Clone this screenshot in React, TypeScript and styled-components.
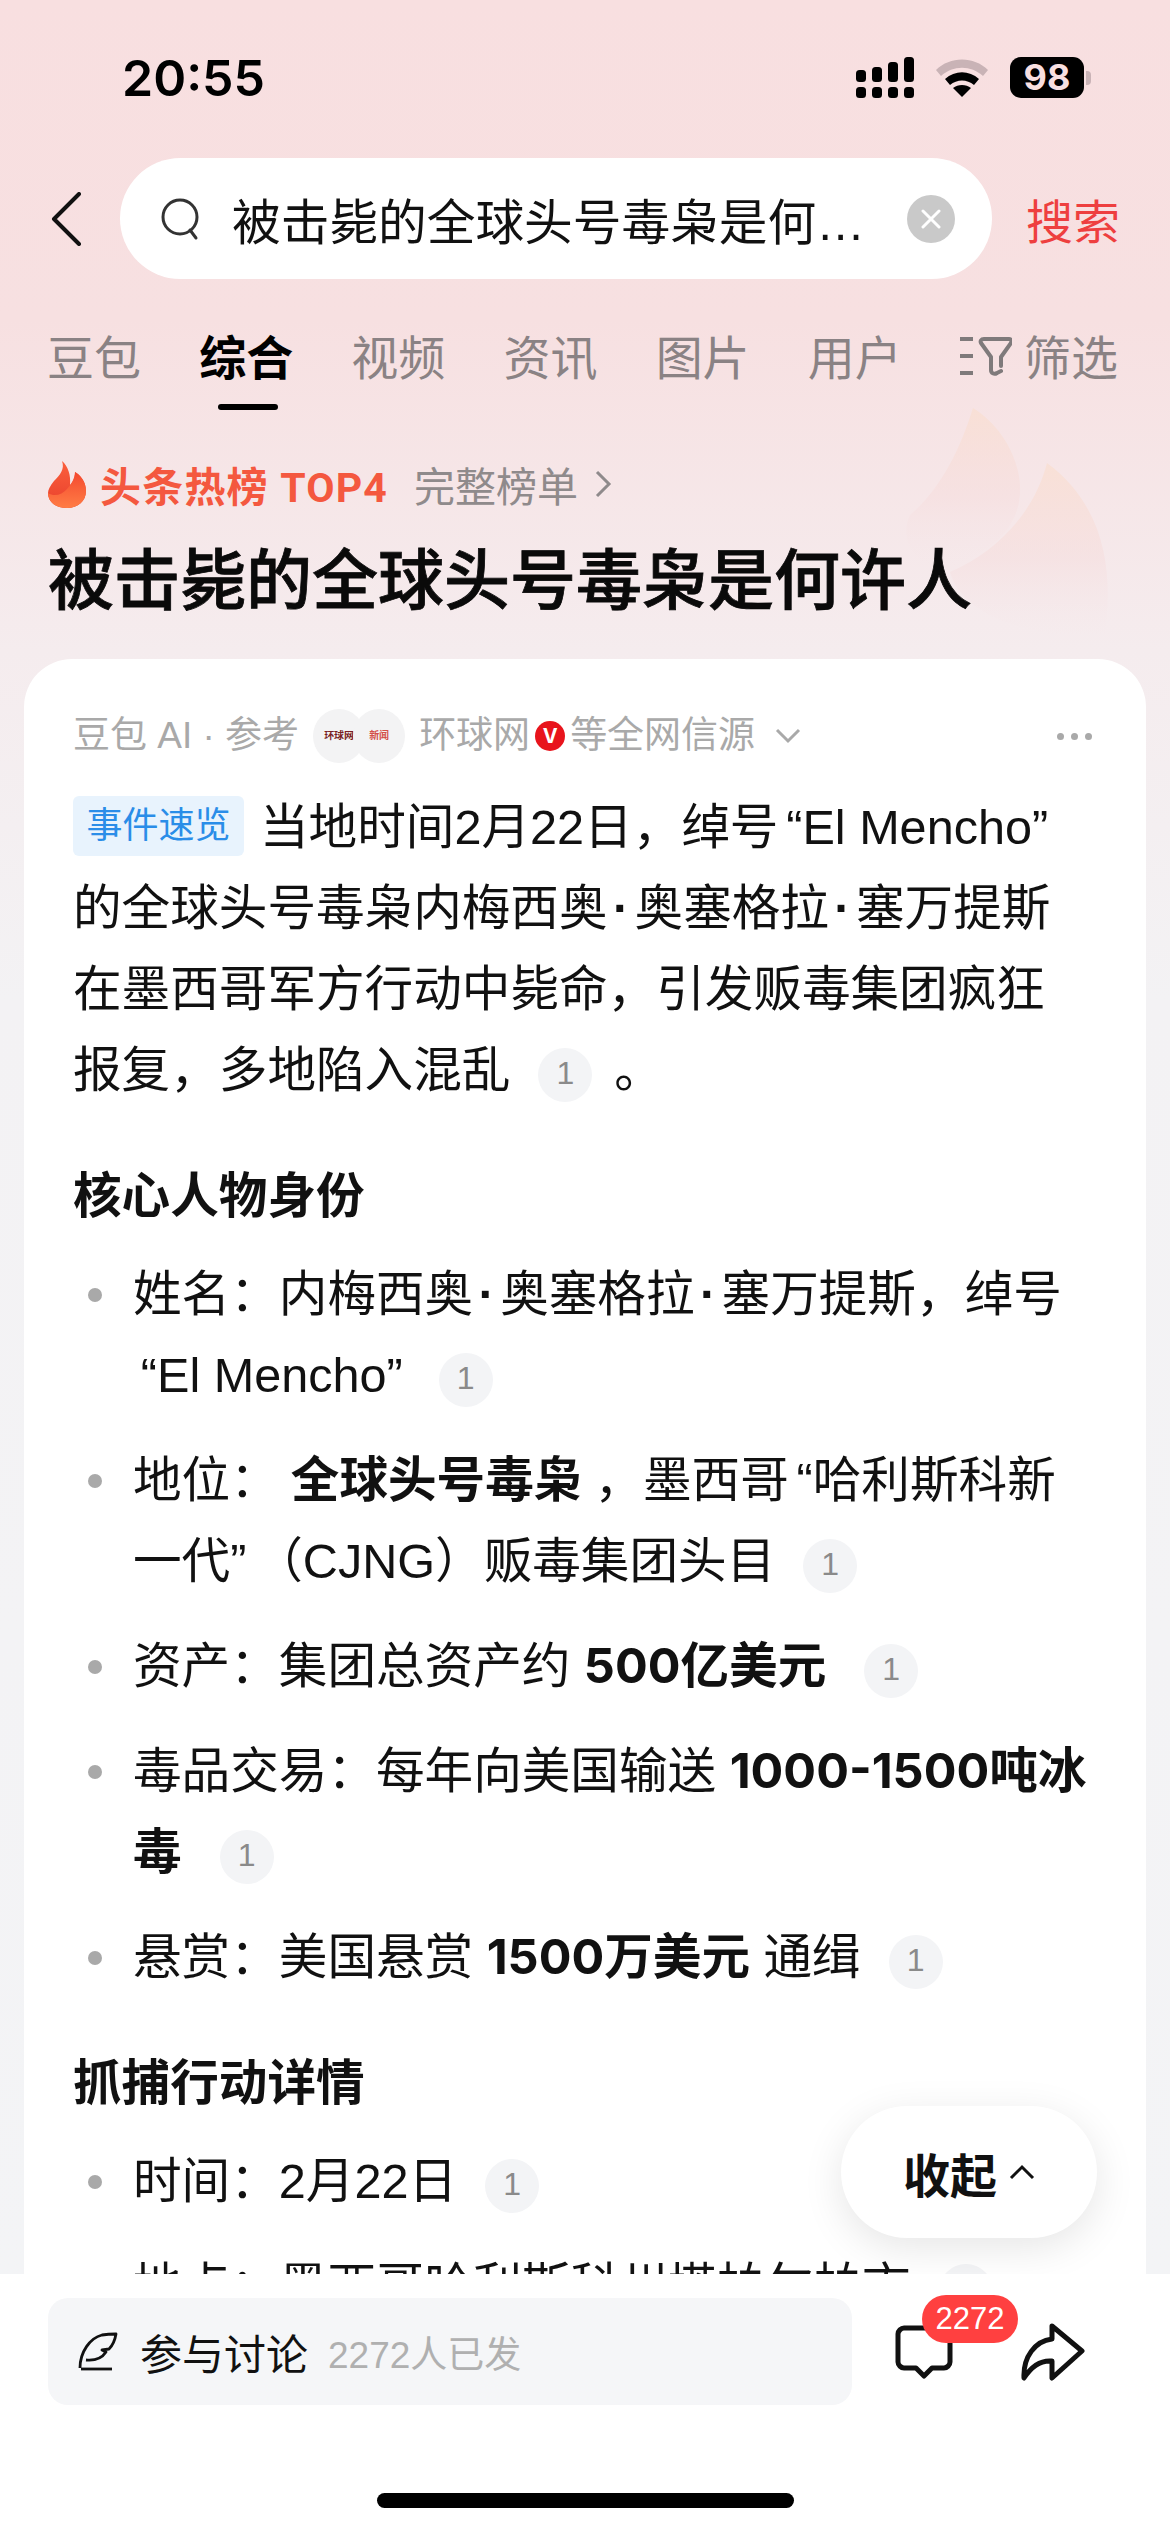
import styled, { createGlobalStyle } from "styled-components"

const textFont = `"Liberation Sans", "Noto Sans CJK SC", sans-serif`
const boldFont = `Inter, "Noto Sans CJK SC", sans-serif`

const GlobalStyle = createGlobalStyle`
  html, body {
    margin: 0;
    padding: 0;
    background: #fff;
  }
  * {
    box-sizing: border-box;
  }
`

const ElMencho = () => (
  <NoBreak>
    <Quote $align="right">“</Quote>El Mencho<Quote $align="left">”</Quote>
  </NoBreak>
)

const App = () => {
  return (
    <Page>
      <GlobalStyle />
      <Content>
        <Flames viewBox="0 0 220 260" fill="none">
          <defs>
            <linearGradient id="decoA" x1="0" y1="0" x2="0" y2="1">
              <stop offset="0" stopColor="#f9dfd2" stopOpacity="0.8" />
              <stop offset="0.55" stopColor="#f6dcdc" stopOpacity="0.5" />
              <stop offset="1" stopColor="#f6e6e8" stopOpacity="0" />
            </linearGradient>
          </defs>
          <path d="M73 8C60 50 40 90 10 115C0 135 10 170 50 167C95 150 122 125 120 85C118 55 100 25 73 8Z" fill="url(#decoA)" />
          <path d="M147 63C135 110 100 150 50 172C60 210 120 240 205 235C212 180 210 110 147 63Z" fill="url(#decoA)" />
        </Flames>
        <StatusBar>
          <Clock>20:55</Clock>
          <StatusIcons>
            <svg width="58" height="41" viewBox="0 0 58 41" fill="#000">
              <rect x="0" y="13" width="10" height="12" rx="3.5" />
              <rect x="16" y="10" width="10" height="15" rx="3.5" />
              <rect x="32" y="5" width="10" height="20" rx="3.5" />
              <rect x="48" y="0" width="10" height="25" rx="3.5" />
              <rect x="0" y="30" width="10" height="11" rx="3.5" />
              <rect x="16" y="30" width="10" height="11" rx="3.5" />
              <rect x="32" y="30" width="10" height="11" rx="3.5" />
              <rect x="48" y="30" width="10" height="11" rx="3.5" />
            </svg>
            <svg width="52" height="38" viewBox="0 0 52 38">
              <path d="M0 11C14-3 38-3 52 11l-5 6C35 6 17 6 5 17z" fill="#c9b3b6" />
              <path d="M9 20c10-9 24-9 34 0l-5 6c-7-6-17-6-24 0z" fill="#000" />
              <path d="M17 29c5-4 13-4 18 0l-9 9z" fill="#000" />
            </svg>
            <Battery>
              <BatteryBody>98</BatteryBody>
              <BatteryCap />
            </Battery>
          </StatusIcons>
        </StatusBar>

        <SearchRow>
          <svg width="32" height="54" viewBox="0 0 32 54" fill="none">
            <path d="M29 2L4 27l25 25" stroke="#111" strokeWidth="4" strokeLinecap="round" strokeLinejoin="round" />
          </svg>
          <SearchBox>
            <svg width="42" height="44" viewBox="0 0 42 44" fill="none">
              <circle cx="20" cy="20" r="17" stroke="#333" strokeWidth="3" />
              <path d="M30 33l6 8" stroke="#333" strokeWidth="3" strokeLinecap="round" />
            </svg>
            <SearchText>被击毙的全球头号毒枭是何…</SearchText>
            <ClearButton>
              <svg width="20" height="20" viewBox="0 0 20 20" fill="none">
                <path d="M2 2l16 16M18 2L2 18" stroke="#fff" strokeWidth="3" strokeLinecap="round" />
              </svg>
            </ClearButton>
          </SearchBox>
          <SearchAction>搜索</SearchAction>
        </SearchRow>

        <Tabs>
          <Tab>豆包</Tab>
          <Tab $active>综合</Tab>
          <Tab>视频</Tab>
          <Tab>资讯</Tab>
          <Tab>图片</Tab>
          <Tab>用户</Tab>
          <Tab>
            <FilterIcon width="52" height="42" viewBox="0 0 52 42" fill="none">
              <path d="M0 3h13M0 20h13M0 37h13" stroke="#7f7a7b" strokeWidth="4" />
              <path d="M24 3H49c2 0 3 2 2 4L41 21v9M24 3c-3 0-4 2-3 4l10 14v13c0 3 3 5 6 3l4-2" stroke="#7f7a7b" strokeWidth="4" strokeLinejoin="round" strokeLinecap="round" />
            </FilterIcon>
            筛选
          </Tab>
        </Tabs>

        <HotRow>
          <svg width="38" height="47" viewBox="0 0 38 47">
            <defs>
              <linearGradient id="flameBack" x1="0" y1="0" x2="0" y2="1">
                <stop offset="0" stopColor="#fb5f3c" />
                <stop offset="1" stopColor="#e8402c" />
              </linearGradient>
              <linearGradient id="flameFront" x1="0" y1="0" x2="0" y2="1">
                <stop offset="0" stopColor="#f4482f" />
                <stop offset="1" stopColor="#ff7d45" />
              </linearGradient>
            </defs>
            <path d="M14 0C17 8 12 14 6 20C2 25 0 29 0 32C0 41 8 47 19 47C30 47 38 40 38 30C38 20 32 14 27 11C27 17 25 21 22 24C23 14 20 5 14 0Z" fill="url(#flameBack)" />
            <path d="M0 32C6 36 14 34 19 28C23 24 27 17 27 11C32 14 38 20 38 30C38 40 30 47 19 47C8 47 0 41 0 32Z" fill="url(#flameFront)" />
          </svg>
          <HotLabel>头条热榜 TOP4</HotLabel>
          <HotLink>完整榜单</HotLink>
          <svg width="18" height="30" viewBox="0 0 18 30" fill="none">
            <path d="M3 3l12 12L3 27" stroke="#8f8a8b" strokeWidth="3" />
          </svg>
        </HotRow>
        <Title>被击毙的全球头号毒枭是何许人</Title>

        <Card>
          <SourceRow>
            <span>豆包 AI · 参考</span>
            <LogoPair>
              <LogoCircle>
                <LogoText $color="#7a1f24">环球网</LogoText>
              </LogoCircle>
              <LogoCircle $overlap>
                <LogoText $color="#d3504a">新闻</LogoText>
              </LogoCircle>
            </LogoPair>
            <span>环球网</span>
            <VerifiedBadge>V</VerifiedBadge>
            <span>等全网信源</span>
            <SourceChevron width="26" height="16" viewBox="0 0 26 16" fill="none">
              <path d="M2 2l11 11L24 2" stroke="#a9a9a9" strokeWidth="3" />
            </SourceChevron>
            <MoreDots>
              <i />
              <i />
              <i />
            </MoreDots>
          </SourceRow>

          <Paragraph>
            <EventTag>事件速览</EventTag>当地时间2月22日，绰号
            <ElMencho />
            的全球头号毒枭内梅西奥<MidDot>·</MidDot>奥塞格拉<MidDot>·</MidDot>
            塞万提斯在墨西哥军方行动中毙命，引发贩毒集团疯狂报复，多地陷入混乱
            <CiteChip>1</CiteChip>
            <CiteGap>。</CiteGap>
          </Paragraph>

          <SectionTitle>核心人物身份</SectionTitle>
          <BulletList>
            <li>
              姓名：内梅西奥<MidDot>·</MidDot>奥塞格拉<MidDot>·</MidDot>塞万提斯，绰号
              <ElMencho />
              <CiteChip>1</CiteChip>
            </li>
            <li>
              地位：<StrongText>全球头号毒枭</StrongText>，墨西哥
              <Quote $align="right">“</Quote>
              哈利斯科新一代
              <Quote $align="left">”</Quote>（CJNG）贩毒集团头目
              <CiteChip>1</CiteChip>
            </li>
            <li>
              资产：集团总资产约 <strong>500亿美元</strong>
              <CiteChip $gap={38}>1</CiteChip>
            </li>
            <li>
              毒品交易：每年向美国输送 <strong>1000-1500吨冰毒</strong>
              <CiteChip $gap={38}>1</CiteChip>
            </li>
            <li>
              悬赏：美国悬赏 <strong>1500万美元</strong> 通缉
              <CiteChip>1</CiteChip>
            </li>
          </BulletList>

          <SectionTitle>抓捕行动详情</SectionTitle>
          <BulletList>
            <li>
              时间：2月22日
              <CiteChip>1</CiteChip>
            </li>
            <li>
              地点：墨西哥哈利斯科州塔帕尔帕市
              <CiteChip>1</CiteChip>
            </li>
          </BulletList>
        </Card>

        <CollapseButton>
          收起
          <svg width="26" height="16" viewBox="0 0 26 16" fill="none">
            <path d="M2 14L13 3l11 11" stroke="#111" strokeWidth="3" />
          </svg>
        </CollapseButton>
      </Content>

      <BottomBar>
        <BottomRow>
          <CommentInput>
            <svg width="40" height="40" viewBox="0 0 40 40" fill="none">
              <path d="M2 36C2 20 12 6 24 3C30 2 35 2 38 2C37 8 35 13 31 17L24 18L28 20C24 26 18 29 8 28" stroke="#111" strokeWidth="2.8" strokeLinejoin="round" />
              <path d="M3 37H34" stroke="#111" strokeWidth="2.8" />
            </svg>
            <InputLabel>参与讨论</InputLabel>
            <InputCount>2272人已发</InputCount>
          </CommentInput>
          <CommentAction>
            <svg width="58" height="54" viewBox="0 0 58 54" fill="none">
              <path d="M9 3H49c3 0 6 3 6 6V37c0 3-3 6-6 6H37l-8 8-8-8H9c-3 0-6-3-6-6V9c0-3 3-6 6-6z" stroke="#111" strokeWidth="5" strokeLinejoin="round" />
            </svg>
            <CountBadge>2272</CountBadge>
          </CommentAction>
          <svg width="64" height="58" viewBox="0 0 64 58" fill="none">
            <path d="M31 3L61 28L31 55V38C20 37 10 44 3 55C2 34 14 18 31 16Z" stroke="#111" strokeWidth="5" strokeLinejoin="round" />
          </svg>
        </BottomRow>
        <HomeIndicator />
      </BottomBar>
    </Page>
  )
}
export default App

const Page = styled.div`
  width: 1170px;
  height: 2532px;
  display: flex;
  flex-direction: column;
  overflow: hidden;
  font-family: ${textFont};
  color: #111;
`

const Content = styled.main`
  position: relative;
  height: 2274px;
  overflow: hidden;
  padding: 0 24px;
  background: linear-gradient(180deg, #f8dfe0 0, #f7e0e1 320px, #f5ecee 650px, #f3f2f4 1000px, #f3f4f6 100%);
`

const Flames = styled.svg`
  position: absolute;
  top: 400px;
  left: 900px;
  width: 220px;
  height: 260px;
`

const StatusBar = styled.div`
  position: relative;
  height: 158px;
  padding: 50px 55px 0 98px;
  display: flex;
  justify-content: space-between;
  align-items: flex-start;
`

const Clock = styled.div`
  font: 600 50px/56px Inter, sans-serif;
  color: #000;
`

const StatusIcons = styled.div`
  display: flex;
  align-items: center;
  gap: 22px;
  margin-top: 7px;
`

const Battery = styled.div`
  display: flex;
  align-items: center;
  gap: 2px;
`

const BatteryBody = styled.div`
  width: 74px;
  height: 41px;
  border-radius: 11px;
  background: #000;
  color: #f8dfe0;
  font: 700 36px/41px Inter, sans-serif;
  text-align: center;
`

const BatteryCap = styled.div`
  width: 5px;
  height: 14px;
  border-radius: 0 4px 4px 0;
  background: #c9b3b6;
`

const SearchRow = styled.div`
  position: relative;
  display: flex;
  align-items: center;
  height: 121px;
  padding-left: 26px;
`

const SearchBox = styled.div`
  width: 872px;
  height: 121px;
  margin-left: 38px;
  padding: 0 37px 0 40px;
  border-radius: 61px;
  background: #fff;
  display: flex;
  align-items: center;
`

const SearchText = styled.div`
  flex: 1;
  margin-left: 30px;
  font-size: 48.7px;
  color: #111;
  white-space: nowrap;
`

const ClearButton = styled.div`
  width: 48px;
  height: 48px;
  border-radius: 50%;
  background: #c9c9c9;
  display: flex;
  align-items: center;
  justify-content: center;
`

const SearchAction = styled.div`
  margin-left: 34px;
  font-size: 47px;
  color: #ee3f3f;
  white-space: nowrap;
`

const Tabs = styled.nav`
  position: relative;
  display: flex;
  justify-content: space-between;
  margin-top: 44px;
  padding: 0 28px 0 23px;
`

const Tab = styled.div<{ $active?: boolean }>`
  position: relative;
  display: flex;
  align-items: center;
  height: 62px;
  font-size: 47px;
  font-weight: ${(p) => (p.$active ? 700 : 400)};
  color: ${(p) => (p.$active ? "#000" : "#8a8284")};

  ${(p) =>
    p.$active &&
    `
    &::after {
      content: "";
      position: absolute;
      left: 19px;
      bottom: -25px;
      width: 60px;
      height: 6px;
      border-radius: 3px;
      background: #000;
    }
  `}
`

const FilterIcon = styled.svg`
  margin: 6px 12px 0 0;
`

const HotRow = styled.div`
  position: relative;
  display: flex;
  align-items: center;
  margin-top: 74px;
  padding-left: 24px;
  height: 50px;
`

const HotLabel = styled.div`
  margin-left: 14px;
  font-family: Roboto, "Noto Sans CJK SC", sans-serif;
  font-size: 41px;
  font-weight: 700;
  letter-spacing: 1.2px;
  color: #f4583f;
  white-space: nowrap;
`

const HotLink = styled.div`
  margin: 0 16px 0 26px;
  font-size: 41px;
  color: #8f8a8b;
`

const Title = styled.h1`
  position: relative;
  margin: 30px 0 0 24px;
  font-size: 66px;
  line-height: 84px;
  font-weight: 500;
  -webkit-text-stroke: 0.8px #0a0a0a;
  color: #0a0a0a;
`

const Card = styled.section`
  position: relative;
  margin-top: 36px;
  padding: 50px 54px 0 49px;
  border-radius: 48px 48px 0 0;
  background: #fff;
  font-size: 48.6px;
  line-height: 81px;
  color: #111;

  strong {
    font-family: ${boldFont};
    font-weight: 700;
    line-height: 1;
  }
`

const SourceRow = styled.div`
  display: flex;
  align-items: center;
  height: 54px;
  font-size: 37px;
  line-height: 54px;
  color: #a9a9a9;
  white-space: nowrap;
`

const SourceChevron = styled.svg`
  margin-left: 20px;
`

const LogoPair = styled.div`
  display: flex;
  margin: 0 14px 0 14px;
`

const LogoCircle = styled.div<{ $overlap?: boolean }>`
  width: 52px;
  height: 54px;
  border-radius: 50%;
  background: #f3f3f4;
  display: flex;
  align-items: center;
  justify-content: center;
  margin-left: ${(p) => (p.$overlap ? "-12px" : "0")};
`

const LogoText = styled.span<{ $color: string }>`
  font-size: 10px;
  font-weight: 700;
  line-height: 12px;
  color: ${(p) => p.$color};
`

const VerifiedBadge = styled.div`
  width: 30px;
  height: 30px;
  margin: 0 5px;
  border-radius: 50%;
  background: #e8141c;
  color: #fff;
  font: 700 20px/30px Inter, sans-serif;
  text-align: center;
`

const MoreDots = styled.div`
  margin-left: auto;
  display: flex;
  gap: 7px;

  i {
    width: 7px;
    height: 7px;
    border-radius: 50%;
    background: #a9a9a9;
  }
`

const Paragraph = styled.p`
  margin: 24px 0 0;
`

const NoBreak = styled.span`
  white-space: nowrap;
`

const Quote = styled.span<{ $align: string }>`
  display: inline-block;
  width: 24px;
  text-align: ${(p) => p.$align};
`

const MidDot = styled.span`
  display: inline-block;
  width: 27px;
  text-align: center;
  font-weight: 700;
`

const EventTag = styled.span`
  display: inline-block;
  width: 171px;
  height: 60px;
  margin: -10px 16px -10px 0;
  border-radius: 6px;
  background: #e8f3fd;
  color: #2a8de8;
  font-size: 36px;
  line-height: 60px;
  text-align: center;
  vertical-align: 6px;
`

const CiteChip = styled.span<{ $gap?: number }>`
  display: inline-block;
  width: 54px;
  height: 54px;
  margin: -10px 0 -10px ${(p) => p.$gap ?? 28}px;
  border-radius: 50%;
  background: #f3f4f6;
  color: #8a8a8a;
  font-family: ${textFont};
  font-size: 32px;
  line-height: 50px;
  font-weight: 400;
  text-align: center;
  vertical-align: 3px;
`

const CiteGap = styled.span`
  margin-left: 22px;
`

const SectionTitle = styled.h2`
  margin: 45px 0 0;
  font-size: 48.6px;
  line-height: 81px;
  font-weight: 700;
  color: #111;
`

const BulletList = styled.ul`
  margin: 17px 0 0;
  padding: 0 0 0 60px;
  list-style: none;

  li {
    position: relative;
    margin-bottom: 24px;
  }

  li::before {
    content: "";
    position: absolute;
    left: -45px;
    top: 34px;
    width: 14px;
    height: 14px;
    border-radius: 50%;
    background: #a9a9a9;
  }
`

const StrongText = styled.strong`
  margin: 0 12px;
`

const CollapseButton = styled.div`
  position: absolute;
  right: 73px;
  bottom: 36px;
  width: 256px;
  height: 132px;
  border-radius: 66px;
  background: #fff;
  box-shadow: 0 10px 40px rgba(0, 0, 0, 0.1);
  display: flex;
  align-items: center;
  justify-content: center;
  gap: 12px;
  font-size: 47px;
  font-weight: 700;
`

const BottomBar = styled.footer`
  position: relative;
  flex: 1;
  background: #fff;
  display: flex;
  flex-direction: column;
  align-items: center;
`

const BottomRow = styled.div`
  width: 100%;
  display: flex;
  align-items: center;
  padding: 24px 0 0 48px;
`

const CommentInput = styled.div`
  width: 804px;
  height: 107px;
  padding-left: 30px;
  border-radius: 20px;
  background: #f5f6f8;
  display: flex;
  align-items: center;
`

const InputLabel = styled.span`
  margin-left: 22px;
  font-size: 42px;
  color: #111;
`

const InputCount = styled.span`
  margin-left: 20px;
  font-size: 37px;
  color: #b0b0b0;
`

const CommentAction = styled.div`
  position: relative;
  margin: 0 68px 0 43px;
  display: flex;
`

const CountBadge = styled.div`
  position: absolute;
  left: 27px;
  top: -30px;
  width: 96px;
  height: 48px;
  border-radius: 24px;
  background: #ff4040;
  color: #fff;
  font-size: 31px;
  line-height: 48px;
  text-align: center;
`

const HomeIndicator = styled.div`
  width: 417px;
  height: 15px;
  margin-top: 88px;
  border-radius: 8px;
  background: #000;
`
